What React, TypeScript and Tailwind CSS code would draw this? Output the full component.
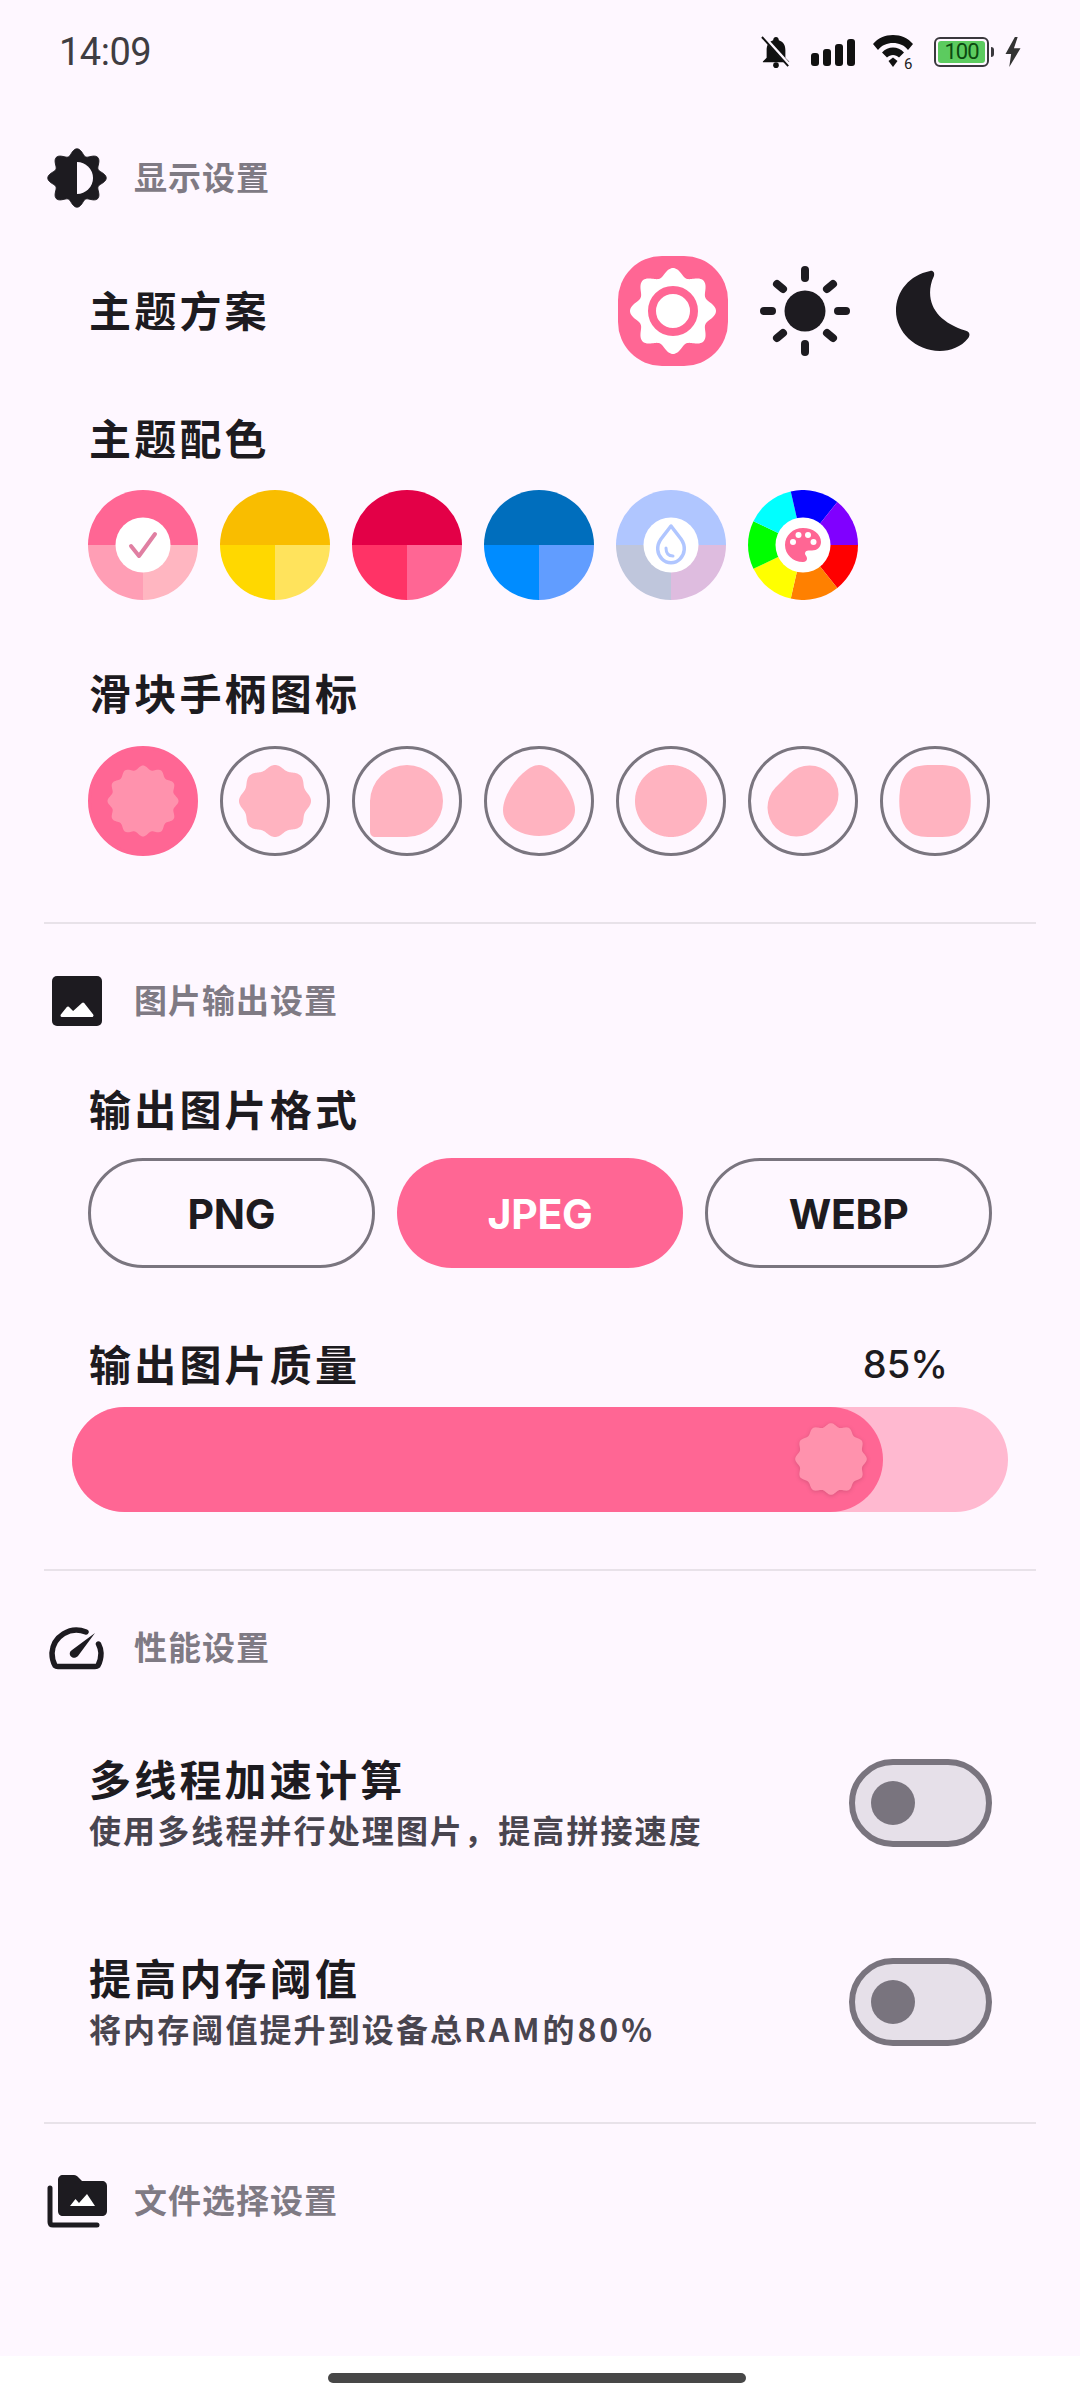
import type { ReactNode } from 'react';

const cjk = "font-['Noto_Sans_CJK_SC','Noto_Sans',sans-serif]";

// wavy blob used for thumbs and the section icon
function wavy(cx: number, cy: number, r: number, amp: number, n: number, rot = 0) {
  const pts: string[] = [];
  for (let i = 0; i < 240; i++) {
    const t = (i / 240) * Math.PI * 2;
    const rr = r + amp * Math.cos(n * (t + rot));
    pts.push(`${(cx + rr * Math.cos(t)).toFixed(2)},${(cy + rr * Math.sin(t)).toFixed(2)}`);
  }
  return `M${pts.join('L')}Z`;
}

function SectionHeader({ icon, title }: { icon: ReactNode; title: string }) {
  return (
    <div className="flex items-center h-[72px] pl-[46px]">
      <div className="w-[62px] h-[72px] flex items-center justify-center shrink-0">{icon}</div>
      <span className={`ml-[26px] pb-[3px] text-[33px] font-bold text-[#7f7a84] tracking-[1px] leading-none ${cjk}`}>{title}</span>
    </div>
  );
}

function Label({ children, className = '' }: { children: ReactNode; className?: string }) {
  return (
    <div className={`h-[60px] pl-[89px] flex items-center text-[42px] font-bold text-[#1d1b20] tracking-[3.2px] leading-none ${cjk} ${className}`}>
      {children}
    </div>
  );
}

function Divider({ className = '' }: { className?: string }) {
  return <div className={`mx-[44px] h-[2px] bg-[#e8e2e9] ${className}`} />;
}

function Swatch({ top, left, right, children }: { top: string; left: string; right: string; children?: ReactNode }) {
  return (
    <svg width="110" height="110" viewBox="0 0 110 110">
      <path d="M0 55A55 55 0 0 1 110 55Z" fill={top} />
      <path d="M0 55H55V110A55 55 0 0 1 0 55Z" fill={left} />
      <path d="M55 55H110A55 55 0 0 1 55 110Z" fill={right} />
      {children}
    </svg>
  );
}

function Wheel() {
  const colors = ['#ff0000', '#ff8000', '#ffff00', '#00ff00', '#00ffff', '#0000ff', '#8000ff'];
  const n = colors.length;
  return (
    <svg width="110" height="110" viewBox="0 0 110 110">
      {colors.map((c, i) => {
        const a = (i / n) * Math.PI * 2;
        const b = ((i + 1) / n) * Math.PI * 2;
        return (
          <path
            key={c}
            d={`M55 55L${55 + 55 * Math.cos(a)} ${55 + 55 * Math.sin(a)}A55 55 0 0 1 ${55 + 55 * Math.cos(b)} ${55 + 55 * Math.sin(b)}Z`}
            fill={c}
          />
        );
      })}
      <circle cx="55" cy="55" r="27.5" fill="#fff" />
      <path
        d="M55 38C45 38 37 45.500 37 55C37 64.500 45 72 55 72C57.500 72 59 70.500 59 68.500C59 66 57 65.500 57 63.500C57 61.500 58.500 60.500 60.500 60.500H64C69 60.500 73 57 73 52C73 44 65 38 55 38Z"
        fill="#ff6694"
      />
      <circle cx="45" cy="52" r="3" fill="#fff" />
      <circle cx="50.500" cy="45" r="3" fill="#fff" />
      <circle cx="60" cy="45" r="3" fill="#fff" />
      <circle cx="65.500" cy="52" r="3" fill="#fff" />
    </svg>
  );
}

const thumbShapes = [
  wavy(55, 55, 33.5, 2, 12),
  wavy(55, 55, 34, 2, 8),
  'M55 19A36 36 0 0 1 55 91H24C20 91 18 89 18 85V55A37 37 0 0 1 55 19Z',
  'M55 19C69 19 91 46 91 64C91 79 75 90 55 90C35 90 19 79 19 64C19 46 41 19 55 19Z',
  wavy(55, 55, 36, 0, 1),
  'M82.5 68.5L68.5 82.5A29 29 0 0 1 27.5 41.5L41.5 27.5A29 29 0 0 1 82.5 68.5Z',
  'M55 19C65 19 74 19 80 24C86 29 89 36 90 44C91 51 91 59 90 66C89 74 86 81 80 86C74 91 65 91 55 91C45 91 36 91 30 86C24 81 21 74 20 66C19 59 19 51 20 44C21 36 24 29 30 24C36 19 45 19 55 19Z',
];

function Thumb({ d, selected }: { d: string; selected?: boolean }) {
  return (
    <div
      className={`w-[110px] h-[110px] rounded-full shrink-0 border-[3px] ${selected ? 'bg-[#ff6694] border-[#ff6694]' : 'border-[#7a757f]'}`}
    >
      <svg width="104" height="104" viewBox="3 3 104 104" className="block">
        <path d={d} fill={selected ? '#ff92ad' : '#ffb3c0'} />
      </svg>
    </div>
  );
}

function FormatButton({ label, active }: { label: string; active?: boolean }) {
  return (
    <div
      className={`h-[110px] pt-[3px] rounded-full flex items-center justify-center text-[41px] font-bold font-['Inter',sans-serif] tracking-[-0.3px] ${
        active ? 'bg-[#ff6694] text-white' : 'border-[3px] border-[#7a757f] text-[#1d1b20]'
      }`}
    >
      {label}
    </div>
  );
}

function Toggle() {
  return (
    <div className="w-[143px] h-[88px] rounded-full border-[6px] border-[#79747e] bg-[#e6e0e9] flex items-center pl-[16px] shrink-0">
      <div className="w-[44px] h-[44px] rounded-full bg-[#79747e]" />
    </div>
  );
}

function SwitchRow({ title, sub, className = '' }: { title: string; sub: ReactNode; className?: string }) {
  return (
    <div className={`flex items-center justify-between pl-[89px] pr-[88px] h-[88px] ${className}`}>
      <div className={`flex flex-col ${cjk}`}>
        <span className="text-[42px] font-bold text-[#1d1b20] tracking-[3.2px] leading-[52px]">{title}</span>
        <span className="text-[32px] font-bold text-[#49454f] tracking-[2.1px] leading-[50px]">{sub}</span>
      </div>
      <Toggle />
    </div>
  );
}

function StatusBar() {
  return (
    <div className="h-[104px] flex items-center justify-between pl-[59px] pr-[57px]">
      <span className="text-[38px] text-[#3f3d42] font-['Roboto',sans-serif] tracking-[-0.5px] leading-none">14:09</span>
      <div className="flex items-center">
        <svg width="30" height="34" viewBox="0 0 32 34">
          <path d="M16 1C18 1 19 2.500 19 4.500C24 6 26 10 26 15V23L30 27V28H2V27L6 23V15C6 10 8 6 13 4.500C13 2.500 14 1 16 1Z" fill="#111" />
          <circle cx="16" cy="31" r="3" fill="#111" />
          <path d="M3 1L31 32" stroke="#fef7ff" strokeWidth="4" />
          <path d="M1 1L29 32" stroke="#111" strokeWidth="2" />
        </svg>
        <svg width="44" height="27" viewBox="0 0 44 27" className="ml-[20px]">
          <rect x="0" y="14" width="8" height="13" rx="3" fill="#111" />
          <rect x="12" y="10" width="8" height="17" rx="3" fill="#111" />
          <rect x="24" y="5" width="8" height="22" rx="3" fill="#111" />
          <rect x="36" y="0" width="8" height="27" rx="3" fill="#111" />
        </svg>
        <svg width="42" height="40" viewBox="0 0 42 40" className="ml-[18px]">
          <path d="M0 12C5 6 12 3 20 3C28 3 35 6 40 12L35 18C31 13 26 11 20 11C14 11 9 13 5 18Z" fill="#111" />
          <path d="M9 20.500C12 17 16 15.500 20 15.500C24 15.500 28 17 31 20.500L26 25.500C24.500 24 22 23 20 23C18 23 15.500 24 14 25.500Z" fill="#111" />
          <path d="M15.500 29L20 25.500L24.500 29L20 35Z" fill="#111" />
          <text x="31" y="37" fontSize="15" fill="#222" fontFamily="Roboto, sans-serif">6</text>
        </svg>
        <div className="ml-[19px] w-[55px] h-[30px] rounded-[6px] border-[2px] border-[#3a383d] p-[2px] flex">
          <div className="flex-1 rounded-[3px] bg-[#5ccb5f] flex items-center justify-center text-[22px] leading-none text-[#0c4a10] font-['Roboto',sans-serif] tracking-[-1px]">
            100
          </div>
        </div>
        <div className="w-[3px] h-[10px] ml-[2px] bg-[#3a383d] rounded-r" />
        <svg width="20" height="30" viewBox="0 0 18 32" className="ml-[9px]">
          <path d="M11 0L1 18H7L5 32L17 12H10L14 0Z" fill="#333" />
        </svg>
      </div>
    </div>
  );
}

export default function App() {
  return (
    <div className="w-[1080px] h-[2400px] bg-[#fef7ff] overflow-hidden flex flex-col">
      <div className="flex-1">
        <StatusBar />

        <div className="mt-[38px]">
          <SectionHeader
            title="显示设置"
            icon={
              <svg width="60" height="60" viewBox="0 0 60 60">
                <path d={wavy(30, 30, 26, 3.2, 8)} fill="#1d1b20" stroke="#1d1b20" strokeWidth="1" />
                <path d="M30 14A16 16 0 0 1 30 46Z" fill="#fef7ff" />
              </svg>
            }
          />
        </div>

        <div className="mt-[42px] flex items-center justify-between pr-[109px] h-[110px]">
          <Label className="pb-[5px]">主题方案</Label>
          <div className="flex items-center">
            <div className="w-[110px] h-[110px] rounded-[44px] bg-[#ff6694] flex items-center justify-center">
              <svg width="88" height="88" viewBox="0 0 88 88">
                <path d={wavy(44, 44, 39, 4, 8)} fill="#fff" />
                <circle cx="44" cy="44" r="21" fill="none" stroke="#ff6694" strokeWidth="8" />
              </svg>
            </div>
            <svg width="92" height="92" viewBox="0 0 92 92" className="ml-[31px]">
              <circle cx="46" cy="46" r="20.500" fill="#1d1b20" />
              <g stroke="#1d1b20" strokeWidth="8" strokeLinecap="round">
                <path d="M46 5V13" />
                <path d="M46 79V87" />
                <path d="M5 46H13" />
                <path d="M79 46H87" />
                <path d="M18 19L24 24" />
                <path d="M68 68L74 73" />
                <path d="M18 73L24 68" />
                <path d="M68 24L74 19" />
              </g>
            </svg>
            <svg width="76" height="84" viewBox="0 0 78 84" className="ml-[44px]">
              <path
                d="M36 1C39 0 41 3 40 6C37 12 36 18 36 23C36 42 50 55 72 62C76 63 78 66 75 70C68 79 57 83 46 83C21 83 1 63 1 42C1 22 15 5 36 1Z"
                fill="#1d1b20"
              />
            </svg>
          </div>
        </div>

        <Label className="mt-[41px]">主题配色</Label>
        <div className="mt-[23px] pl-[88px] flex gap-[22px]">
          <Swatch top="#ff6694" left="#ff9eb5" right="#ffb6c1">
            <circle cx="55" cy="55" r="27.500" fill="#fff" />
            <path d="M43 56L51 66L67 44" fill="none" stroke="#e07fa2" strokeWidth="4" strokeLinejoin="round" strokeLinecap="round" />
          </Swatch>
          <Swatch top="#f9bd00" left="#ffd800" right="#ffe35c" />
          <Swatch top="#e30047" left="#ff3366" right="#ff6694" />
          <Swatch top="#006ebd" left="#008cff" right="#619dff" />
          <Swatch top="#b0c6ff" left="#bfc6dc" right="#debcdf">
            <circle cx="55" cy="55" r="27.500" fill="#fff" />
            <path d="M55 36L65 49C70 56 69 64 64 69C59 74 51 74 46 69C41 64 40 56 45 49Z" fill="none" stroke="#b0c6ff" strokeWidth="3.500" strokeLinejoin="round" />
            <path d="M50 58C50 63 52 66 57 66" fill="none" stroke="#b0c6ff" strokeWidth="3" strokeLinecap="round" />
          </Swatch>
          <Wheel />
        </div>

        <Label className="mt-[62px]">滑块手柄图标</Label>
        <div className="mt-[24px] pl-[88px] flex gap-[22px]">
          {thumbShapes.map((d, i) => (
            <Thumb key={i} d={d} selected={i === 0} />
          ))}
        </div>

        <Divider className="mt-[66px]" />

        <div className="mt-[41px]">
          <SectionHeader
            title="图片输出设置"
            icon={
              <svg width="50" height="50" viewBox="0 0 50 50">
                <rect width="50" height="50" rx="5" fill="#1d1b20" />
                <path d="M10 39.500L16 32L21 37L31 28L40 39.500Z" fill="#fff" stroke="#fff" strokeWidth="3" strokeLinejoin="round" />
              </svg>
            }
          />
        </div>

        <Label className="mt-[41px]">输出图片格式</Label>
        <div className="mt-[20px] ml-[88px] w-[904px] grid grid-cols-3 gap-[22px]">
          <FormatButton label="PNG" />
          <FormatButton label="JPEG" active />
          <FormatButton label="WEBP" />
        </div>

        <div className="mt-[66px] flex items-center justify-between pr-[132px]">
          <Label className="pb-[2px]">输出图片质量</Label>
          <span className="text-[38px] font-medium text-[#1d1b20] font-['Inter',sans-serif]">85%</span>
        </div>

        <div className="mt-[13px] ml-[72px] w-[936px] h-[105px] rounded-full bg-[#ffb9d0] relative">
          <div className="h-full w-[811px] rounded-full bg-[#ff6694]" />
          <svg width="76" height="76" viewBox="0 0 76 76" className="absolute left-[721px] top-[14px] drop-shadow-sm">
            <path d={wavy(38, 38, 34, 1.8, 12)} fill="#ff92ad" />
          </svg>
        </div>

        <Divider className="mt-[57px]" />

        <div className="mt-[41px]">
          <SectionHeader
            title="性能设置"
            icon={
              <svg width="56" height="46" viewBox="0 0 56 46">
                <path
                  d="M37 7A24.500 24.500 0 0 0 3 28C3 33 4 37 6 40.500C7 41.500 8 41.500 9 41.500H46C47 41.500 48 41.500 49 40.500C51 37 52 33 52 28C52 25 51 22 49.500 19"
                  fill="none"
                  stroke="#1d1b20"
                  strokeWidth="5.500"
                  strokeLinecap="round"
                />
                <path d="M46 8L29 31C27 33 24 33.500 22 31.500C20 29.500 20.500 26.500 23 25Z" fill="#1d1b20" />
              </svg>
            }
          />
        </div>

        <SwitchRow className="mt-[75px]" title="多线程加速计算" sub="使用多线程并行处理图片，提高拼接速度" />
        <SwitchRow
          className="mt-[111px]"
          title="提高内存阈值"
          sub={
            <>
              将内存阈值提升到设备总<span className="tracking-[3px]">RAM的80%</span>
            </>
          }
        />

        <Divider className="mt-[76px]" />

        <div className="mt-[41px]">
          <SectionHeader
            title="文件选择设置"
            icon={
              <svg width="60" height="53" viewBox="0 0 60 53">
                <path d="M16 0H27C29 0 30 1 31 2L35 6H55C58 6 60 8 60 11V36C60 39 58 41 55 41H16C13 41 11 39 11 36V5C11 2 13 0 16 0Z" fill="#1d1b20" />
                <path d="M3 13V47C3 49 4 50 6 50H50" fill="none" stroke="#1d1b20" strokeWidth="5" strokeLinecap="round" />
                <path d="M23 31L28.500 24L32 28L40 19L48 31Z" fill="#fff" />
              </svg>
            }
          />
        </div>
      </div>

      <div className="h-[44px] bg-white pt-[17px] pl-[328px]">
        <div className="w-[418px] h-[10px] rounded-full bg-[#474747]" />
      </div>
    </div>
  );
}
